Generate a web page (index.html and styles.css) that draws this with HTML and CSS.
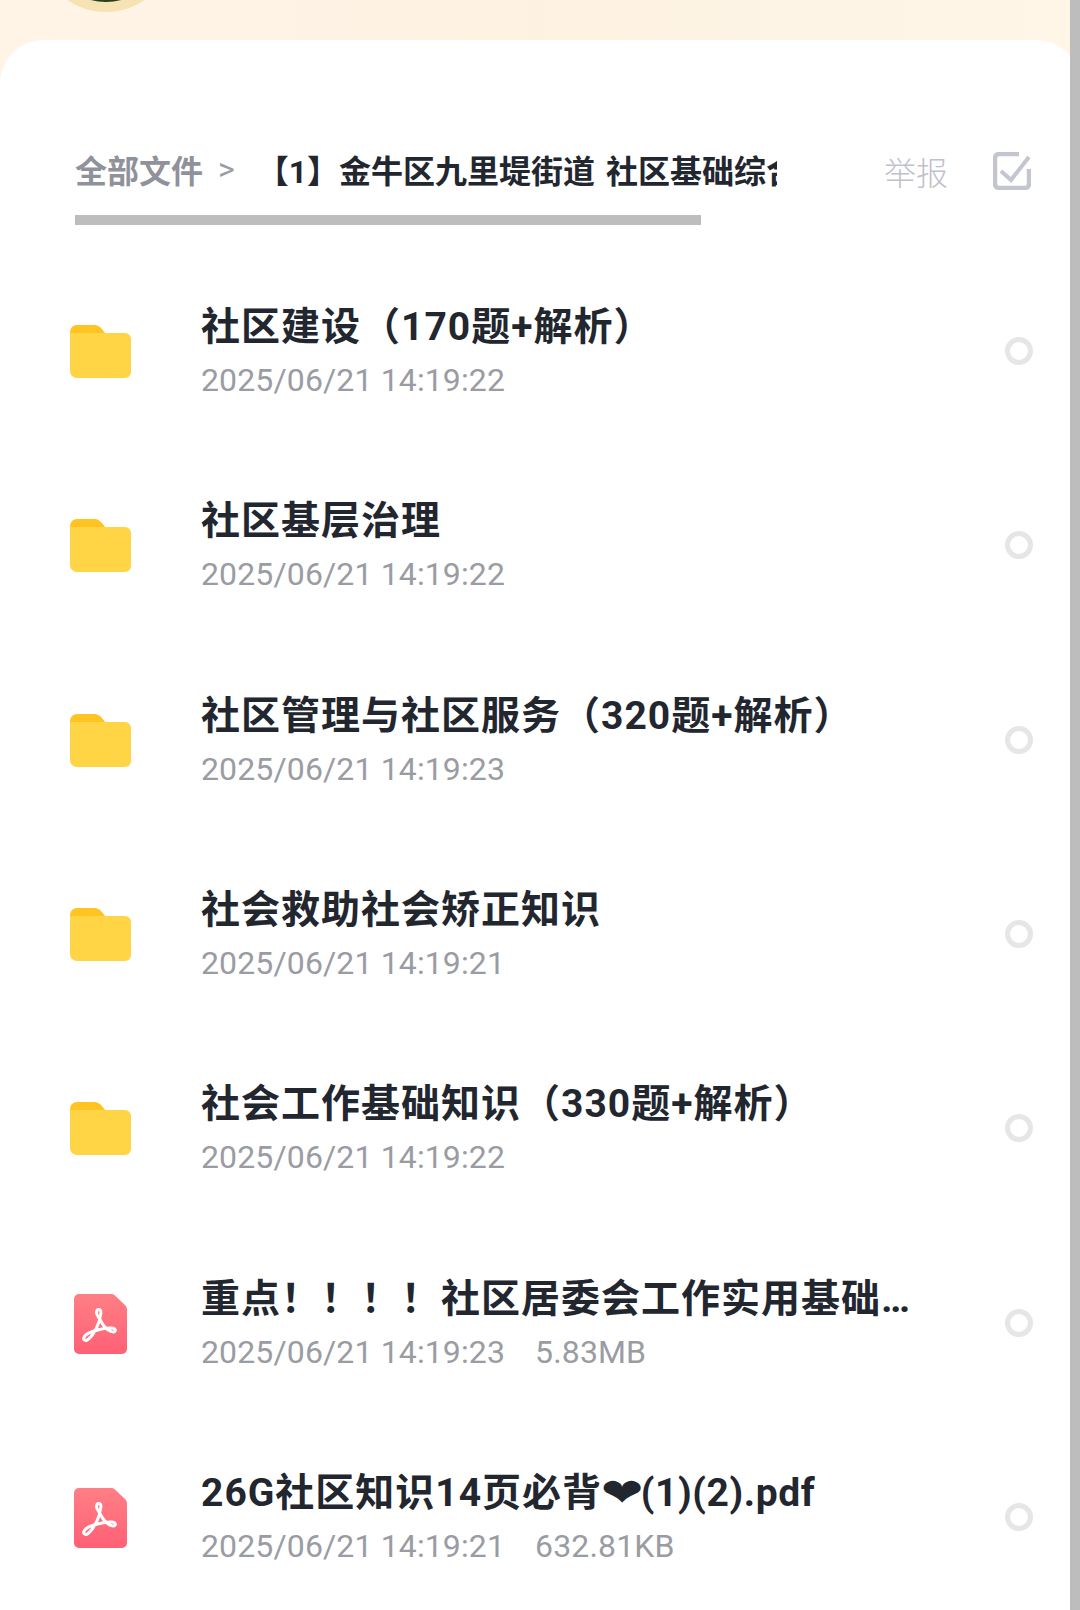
FILE: index.html
```html
<!DOCTYPE html>
<html lang="zh-CN">
<head>
  <meta charset="UTF-8">
  <meta name="viewport" content="width=device-width, initial-scale=1.0">
  <link rel="stylesheet" href="styles.css">
  <title>全部文件</title>
</head>
<body>
  <svg class="defs" width="0" height="0">
    <symbol id="folder" viewBox="0 0 61 54">
      <path d="M7 0h17c4 0 6 2 8 4l3 4H50a7 7 0 0 1 7 7v10H0V7a7 7 0 0 1 7-7z" fill="#ffc422"/>
      <path d="M6 8h49a6 6 0 0 1 6 6v33a6 6 0 0 1-6 6H7a7 7 0 0 1-7-7V8z" fill="#ffd445"/>
    </symbol>
    <symbol id="pdf" viewBox="0 0 53 60">
      <defs>
        <linearGradient id="pdfred" x1="0" y1="0" x2="0" y2="1">
          <stop offset="0" stop-color="#ff7f85"/>
          <stop offset="1" stop-color="#ff6075"/>
        </linearGradient>
      </defs>
      <path d="M5 0h32c2 0 3 .5 4.500 2l9.500 9c1.500 1.500 2 3 2 5v39a5 5 0 0 1-5 5H5a5 5 0 0 1-5-5V5a5 5 0 0 1 5-5z" fill="url(#pdfred)"/>
      <path d="M22.500 19c0-2.500 1-3.500 2.300-3.500s2.300 1 2.100 3.500C26.500 24 25 29 22.500 34c-2.500 5-6 9.500-8.500 11.500-2.300 1.800-4.800.5-4.200-1.600C10.500 41 15 38.500 20 37c6-1.800 13-3.500 18-3 2.500.3 3.800 1.500 3.300 2.800-.5 1.300-2.200 1.600-4.200.7C32 35.500 28.500 30.500 26.500 26.500c-1.500-3-3.800-5-4-7.500z" fill="none" stroke="#fff" stroke-width="3" stroke-linejoin="round"/>
    </symbol>
  </svg>

  <div class="page">
    <div class="top">
      <div class="avatar"><div class="avatar-in"></div></div>
    </div>

    <div class="card">
      <div class="head">
        <div class="path-wrap">
          <div class="path">
            <span class="crumb-all">全部文件</span>
            <span class="crumb-sep">&gt;</span>
            <span class="crumb-now">【1】金牛区九里堤街道 社区基础综合知识题库大全</span>
          </div>
          <div class="thumb"></div>
        </div>
        <div class="actions">
          <span class="report">举报</span>
          <svg class="check" viewBox="0 0 38 38" width="38" height="38">
            <path d="M26 2H6a4 4 0 0 0-4 4v26a4 4 0 0 0 4 4h26a4 4 0 0 0 4-4V17" fill="none" stroke="#c3c5d0" stroke-width="4.500"/>
            <path d="M8 19l10 9L36 5" fill="none" stroke="#c3c5d0" stroke-width="4"/>
          </svg>
        </div>
      </div>

      <div class="list">
        <div class="row">
          <svg class="ico-folder"><use href="#folder"/></svg>
          <div class="info">
            <div class="name">社区建设（170题+解析）</div>
            <div class="meta">2025/06/21 14:19:22</div>
          </div>
          <div class="radio"></div>
        </div>
        <div class="row">
          <svg class="ico-folder"><use href="#folder"/></svg>
          <div class="info">
            <div class="name">社区基层治理</div>
            <div class="meta">2025/06/21 14:19:22</div>
          </div>
          <div class="radio"></div>
        </div>
        <div class="row">
          <svg class="ico-folder"><use href="#folder"/></svg>
          <div class="info">
            <div class="name">社区管理与社区服务（320题+解析）</div>
            <div class="meta">2025/06/21 14:19:23</div>
          </div>
          <div class="radio"></div>
        </div>
        <div class="row">
          <svg class="ico-folder"><use href="#folder"/></svg>
          <div class="info">
            <div class="name">社会救助社会矫正知识</div>
            <div class="meta">2025/06/21 14:19:21</div>
          </div>
          <div class="radio"></div>
        </div>
        <div class="row">
          <svg class="ico-folder"><use href="#folder"/></svg>
          <div class="info">
            <div class="name">社会工作基础知识（330题+解析）</div>
            <div class="meta">2025/06/21 14:19:22</div>
          </div>
          <div class="radio"></div>
        </div>
        <div class="row">
          <svg class="ico-pdf"><use href="#pdf"/></svg>
          <div class="info">
            <div class="name">重点<span class="bang">！！！！</span>社区居委会工作实用基础知识手册大全.pdf</div>
            <div class="meta">2025/06/21 14:19:23<span class="size">5.83MB</span></div>
          </div>
          <div class="radio"></div>
        </div>
        <div class="row">
          <svg class="ico-pdf"><use href="#pdf"/></svg>
          <div class="info">
            <div class="name">26G社区知识14页必背<span class="heart">❤</span><span class="tail">(1)(2).pdf</span></div>
            <div class="meta">2025/06/21 14:19:21<span class="size">632.81KB</span></div>
          </div>
          <div class="radio"></div>
        </div>
      </div>
    </div>

    <div class="scrollbar"></div>
  </div>
</body>
</html>
```

FILE: styles.css
```css
* {
  box-sizing: border-box;
}

body {
  margin: 0;
  font-family: Roboto, "Noto Sans CJK SC", sans-serif;
  background: #fff;
}

.defs {
  position: absolute;
}

.page {
  position: relative;
  width: 1080px;
  height: 1610px;
  overflow: hidden;
  background: linear-gradient(90deg, #fff4e6 0%, #fdf2e2 50%, #fff6e8 100%);
}

.top {
  height: 40px;
  padding-left: 37px;
  overflow: hidden;
}

.avatar {
  width: 138px;
  height: 138px;
  margin-top: -126px;
  border-radius: 50%;
  background: #f6e3b4;
  padding: 10px;
}

.avatar-in {
  width: 118px;
  height: 118px;
  border-radius: 50%;
  background: #26401f;
}

.card {
  height: 1570px;
  padding-top: 107px;
  background: #fff;
  border-radius: 44px 44px 0 0;
}

.head {
  display: flex;
  align-items: flex-start;
  padding: 0 49px 0 75px;
  margin-bottom: 30px;
}

.path-wrap {
  width: 702px;
  overflow: hidden;
}

.path {
  display: flex;
  align-items: center;
  height: 44px;
  white-space: nowrap;
  font-size: 32px;
  font-weight: 700;
}

.crumb-all {
  color: #8f929b;
}

.crumb-sep {
  margin: 0 22px 0 15px;
  font-size: 32px;
  font-weight: 400;
  color: #9a9ca4;
}

.crumb-now {
  color: #22262f;
  word-spacing: 3px;
}

.thumb {
  width: 626px;
  height: 10px;
  margin-top: 24px;
  background: #bdbdbd;
}

.actions {
  display: flex;
  align-items: center;
  height: 48px;
  margin-left: auto;
}

.report {
  font-size: 32px;
  font-weight: 300;
  color: #bfc1cb;
  margin-right: 45px;
}

.list {
  display: grid;
  grid-template-columns: minmax(0, 1fr);
  grid-auto-rows: 194.3px;
}

.row {
  display: flex;
  align-items: center;
  padding: 0 47px 0 70px;
}

.ico-folder {
  width: 61px;
  height: 54px;
  margin-right: 70px;
  flex: none;
}

.ico-pdf {
  width: 53px;
  height: 60px;
  margin: 0 74px 0 4px;
  flex: none;
}

.info {
  flex: 1;
  min-width: 0;
  margin-right: 90px;
  padding-bottom: 2px;
}

.name {
  height: 50px;
  line-height: 50px;
  font-size: 39px;
  font-weight: 700;
  letter-spacing: 1px;
  color: #22262f;
  white-space: nowrap;
  overflow: hidden;
  text-overflow: ellipsis;
}

.bang {
  font-family: "Noto Sans CJK TC", sans-serif;
  line-height: 1;
}

.heart {
  display: inline-block;
  margin: 0 1px 0 4px;
  font-family: "DejaVu Sans", sans-serif;
  line-height: 1;
  transform: scaleX(1.3);
}

.tail {
  letter-spacing: .6px;
}

.meta {
  height: 40px;
  line-height: 40px;
  margin-top: 8px;
  font-size: 32px;
  letter-spacing: .13px;
  color: #9a9ca3;
  white-space: nowrap;
}

.size {
  margin-left: 30px;
}

.radio {
  width: 28px;
  height: 28px;
  flex: none;
  margin-bottom: 2px;
  border: 5px solid #e6e6e6;
  border-radius: 50%;
}

.scrollbar {
  position: absolute;
  top: 0;
  right: 0;
  width: 10px;
  height: 100%;
  background: #bdbdbd;
}
```
